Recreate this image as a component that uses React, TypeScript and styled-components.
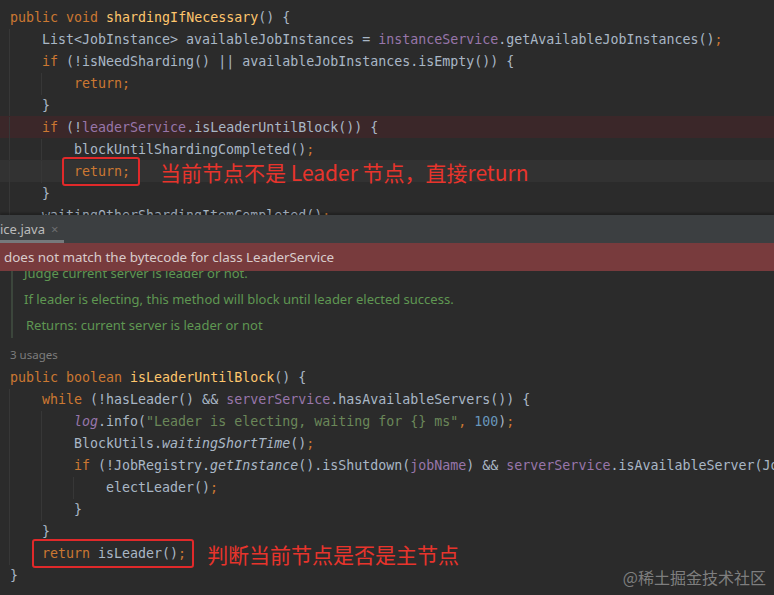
import React from "react";
import styled, { createGlobalStyle } from "styled-components";

type Kind = "kw" | "fn" | "txt" | "fld" | "str" | "num" | "it" | "itf";
type Tok = [Kind, string];

interface CodeLine {
  indent: number;
  toks: Tok[];
  tone?: "error" | "caret";
  box?: { left: number; right: number };
  note?: { text: string; gap: number };
}

const palette: Record<Kind, string> = {
  kw: "#cc7832",
  fn: "#ffc66d",
  txt: "#a9b7c6",
  fld: "#9876aa",
  str: "#6a8759",
  num: "#6897bb",
  it: "#a9b7c6",
  itf: "#9876aa",
};

const GlobalStyle = createGlobalStyle`
  html, body {
    margin: 0;
    padding: 0;
    background: #2b2b2b;
  }
  * {
    box-sizing: border-box;
  }
`;

const Screen = styled.div`
  position: relative;
  width: 774px;
  height: 595px;
  overflow: hidden;
  background: #2b2b2b;
  display: flex;
  flex-direction: column;
`;

const CodePane = styled.div<{ $height?: number; $padTop?: number }>`
  display: flex;
  flex-direction: column;
  padding-top: ${p => p.$padTop ?? 0}px;
  height: ${p => (p.$height ? `${p.$height}px` : "auto")};
  overflow: hidden;
  flex-shrink: 0;
`;

const Line = styled.div<{ $tone?: "error" | "caret" }>`
  display: flex;
  align-items: center;
  height: 22px;
  padding-left: 10px;
  padding-top: 1px;
  flex-shrink: 0;
  white-space: pre;
  background: ${p =>
    p.$tone === "error" ? "#3b2729" : p.$tone === "caret" ? "#323232" : "transparent"};
`;

const Guide = styled.span`
  display: inline-block;
  width: 32px;
  height: 22px;
  flex-shrink: 0;
  border-left: 1px solid #373737;
  margin-left: -1px;
  margin-right: 1px;
`;

const Code = styled.span`
  font-family: "DejaVu Sans Mono", "Liberation Mono", monospace;
  font-size: 13.3px;
  line-height: 22px;
  white-space: pre;
  flex-shrink: 0;
`;

const Token = styled.span<{ $kind: Kind }>`
  color: ${p => palette[p.$kind]};
  font-style: ${p => (p.$kind === "it" || p.$kind === "itf" ? "italic" : "normal")};
`;

const Boxed = styled.span<{ $l: number; $r: number }>`
  position: relative;
  display: inline-block;
  height: 22px;
  line-height: 22px;
  &::after {
    content: "";
    position: absolute;
    left: -${p => p.$l}px;
    right: -${p => p.$r}px;
    top: -4px;
    bottom: -3px;
    border: 2px solid #e0292a;
    border-radius: 3px;
  }
`;

const Note = styled.span<{ $gap: number }>`
  margin-left: ${p => p.$gap}px;
  font-family: "Noto Sans CJK SC", "Noto Sans", sans-serif;
  font-size: 21px;
  line-height: 22px;
  color: #e8342c;
  white-space: pre;
  flex-shrink: 0;
`;

const TabBar = styled.div`
  height: 28px;
  background: #3c3f41;
  display: flex;
  align-items: stretch;
  flex-shrink: 0;
  box-shadow: 0 -2px 2px rgba(0, 0, 0, 0.25);
`;

const Tab = styled.div`
  display: flex;
  align-items: center;
  gap: 6px;
  width: 64px;
  border-bottom: 3px solid #76797c;
  padding-top: 2px;
  font-family: "Noto Sans", "Liberation Sans", sans-serif;
  font-size: 13px;
  color: #bbbbbb;
  white-space: nowrap;
  overflow: hidden;
`;

const TabClose = styled.span`
  color: #6c6e70;
  font-size: 13px;
`;

const Banner = styled.div`
  height: 28px;
  background: #783b3d;
  display: flex;
  align-items: center;
  padding-left: 4px;
  flex-shrink: 0;
  font-family: "Noto Sans", "Liberation Sans", sans-serif;
  font-size: 13.4px;
  color: #d9cccc;
  position: relative;
  z-index: 1;
`;

const DocBlock = styled.div`
  margin-left: 11px;
  height: 67px;
  margin-bottom: 6px;
  border-left: 2px solid #3c463c;
  overflow: hidden;
  flex-shrink: 0;
`;

const DocInner = styled.div`
  margin-top: -11px;
  display: flex;
  flex-direction: column;
`;

const DocLine = styled.div<{ $pad: number }>`
  height: 26px;
  line-height: 26px;
  padding-left: ${p => p.$pad}px;
  font-family: "Noto Sans", "Liberation Sans", sans-serif;
  font-size: 13px;
  color: #5f9752;
  white-space: nowrap;
`;

const Usages = styled.div`
  height: 22px;
  line-height: 22px;
  padding-left: 10px;
  font-family: "Noto Sans", "Liberation Sans", sans-serif;
  font-size: 11.5px;
  color: #7d7d7d;
  flex-shrink: 0;
`;

const Watermark = styled.div`
  position: absolute;
  right: 8px;
  bottom: 6px;
  font-family: "Noto Sans CJK SC", "Noto Sans", sans-serif;
  font-size: 16px;
  color: rgba(200, 200, 200, 0.55);
  white-space: nowrap;
`;

const topLines: CodeLine[] = [
  { indent: 0, toks: [["kw", "public void "], ["fn", "shardingIfNecessary"], ["txt", "() {"]] },
  {
    indent: 1,
    toks: [
      ["txt", "List<JobInstance> availableJobInstances = "],
      ["fld", "instanceService"],
      ["txt", ".getAvailableJobInstances()"],
      ["kw", ";"],
    ],
  },
  {
    indent: 1,
    toks: [["kw", "if "], ["txt", "(!isNeedSharding() || availableJobInstances.isEmpty()) {"]],
  },
  { indent: 2, toks: [["kw", "return;"]] },
  { indent: 1, toks: [["txt", "}"]] },
  {
    indent: 1,
    tone: "error",
    toks: [["kw", "if "], ["txt", "(!"], ["fld", "leaderService"], ["txt", ".isLeaderUntilBlock()) {"]],
  },
  { indent: 2, toks: [["txt", "blockUntilShardingCompleted()"], ["kw", ";"]] },
  {
    indent: 2,
    tone: "caret",
    toks: [["kw", "return;"]],
    box: { left: 12, right: 10 },
    note: { text: "当前节点不是 Leader 节点，直接return", gap: 30 },
  },
  { indent: 1, toks: [["txt", "}"]] },
  { indent: 1, toks: [["txt", "waitingOtherShardingItemCompleted()"], ["kw", ";"]] },
];

const bottomLines: CodeLine[] = [
  { indent: 0, toks: [["kw", "public boolean "], ["fn", "isLeaderUntilBlock"], ["txt", "() {"]] },
  {
    indent: 1,
    toks: [
      ["kw", "while "],
      ["txt", "(!hasLeader() && "],
      ["fld", "serverService"],
      ["txt", ".hasAvailableServers()) {"],
    ],
  },
  {
    indent: 2,
    toks: [
      ["itf", "log"],
      ["txt", ".info("],
      ["str", "\"Leader is electing, waiting for {} ms\""],
      ["kw", ", "],
      ["num", "100"],
      ["txt", ")"],
      ["kw", ";"],
    ],
  },
  { indent: 2, toks: [["txt", "BlockUtils."], ["it", "waitingShortTime"], ["txt", "()"], ["kw", ";"]] },
  {
    indent: 2,
    toks: [
      ["kw", "if "],
      ["txt", "(!JobRegistry."],
      ["it", "getInstance"],
      ["txt", "().isShutdown("],
      ["fld", "jobName"],
      ["txt", ") && "],
      ["fld", "serverService"],
      ["txt", ".isAvailableServer(Jo"],
    ],
  },
  { indent: 3, toks: [["txt", "electLeader()"], ["kw", ";"]] },
  { indent: 2, toks: [["txt", "}"]] },
  { indent: 1, toks: [["txt", "}"]] },
  {
    indent: 1,
    toks: [["kw", "return "], ["txt", "isLeader()"], ["kw", ";"]],
    box: { left: 10, right: 8 },
    note: { text: "判断当前节点是否是主节点", gap: 21 },
  },
  { indent: 0, toks: [["txt", "}"]] },
];

const renderLine = (line: CodeLine, i: number) => {
  const guides = Array.from({ length: line.indent }, (_, k) => <Guide key={k} />);
  const tokens = line.toks.map(([kind, text], k) => (
    <Token key={k} $kind={kind}>
      {text}
    </Token>
  ));
  return (
    <Line key={i} $tone={line.tone}>
      {guides}
      <Code>
        {line.box ? (
          <Boxed $l={line.box.left} $r={line.box.right}>
            {tokens}
          </Boxed>
        ) : (
          tokens
        )}
      </Code>
      {line.note && <Note $gap={line.note.gap}>{line.note.text}</Note>}
    </Line>
  );
};

export default function App() {
  return (
    <>
      <GlobalStyle />
      <Screen>
        <CodePane $height={215} $padTop={6}>
          {topLines.map(renderLine)}
        </CodePane>
        <TabBar>
          <Tab>
            <span>ice.java</span>
            <TabClose>×</TabClose>
          </Tab>
        </TabBar>
        <Banner>does not match the bytecode for class LeaderService</Banner>
        <DocBlock>
          <DocInner>
            <DocLine $pad={11}>Judge current server is leader or not.</DocLine>
            <DocLine $pad={11}>If leader is electing, this method will block until leader elected success.</DocLine>
            <DocLine $pad={13}>Returns: current server is leader or not</DocLine>
          </DocInner>
        </DocBlock>
        <Usages>3 usages</Usages>
        <CodePane>{bottomLines.map(renderLine)}</CodePane>
        <Watermark>@稀土掘金技术社区</Watermark>
      </Screen>
    </>
  );
}
